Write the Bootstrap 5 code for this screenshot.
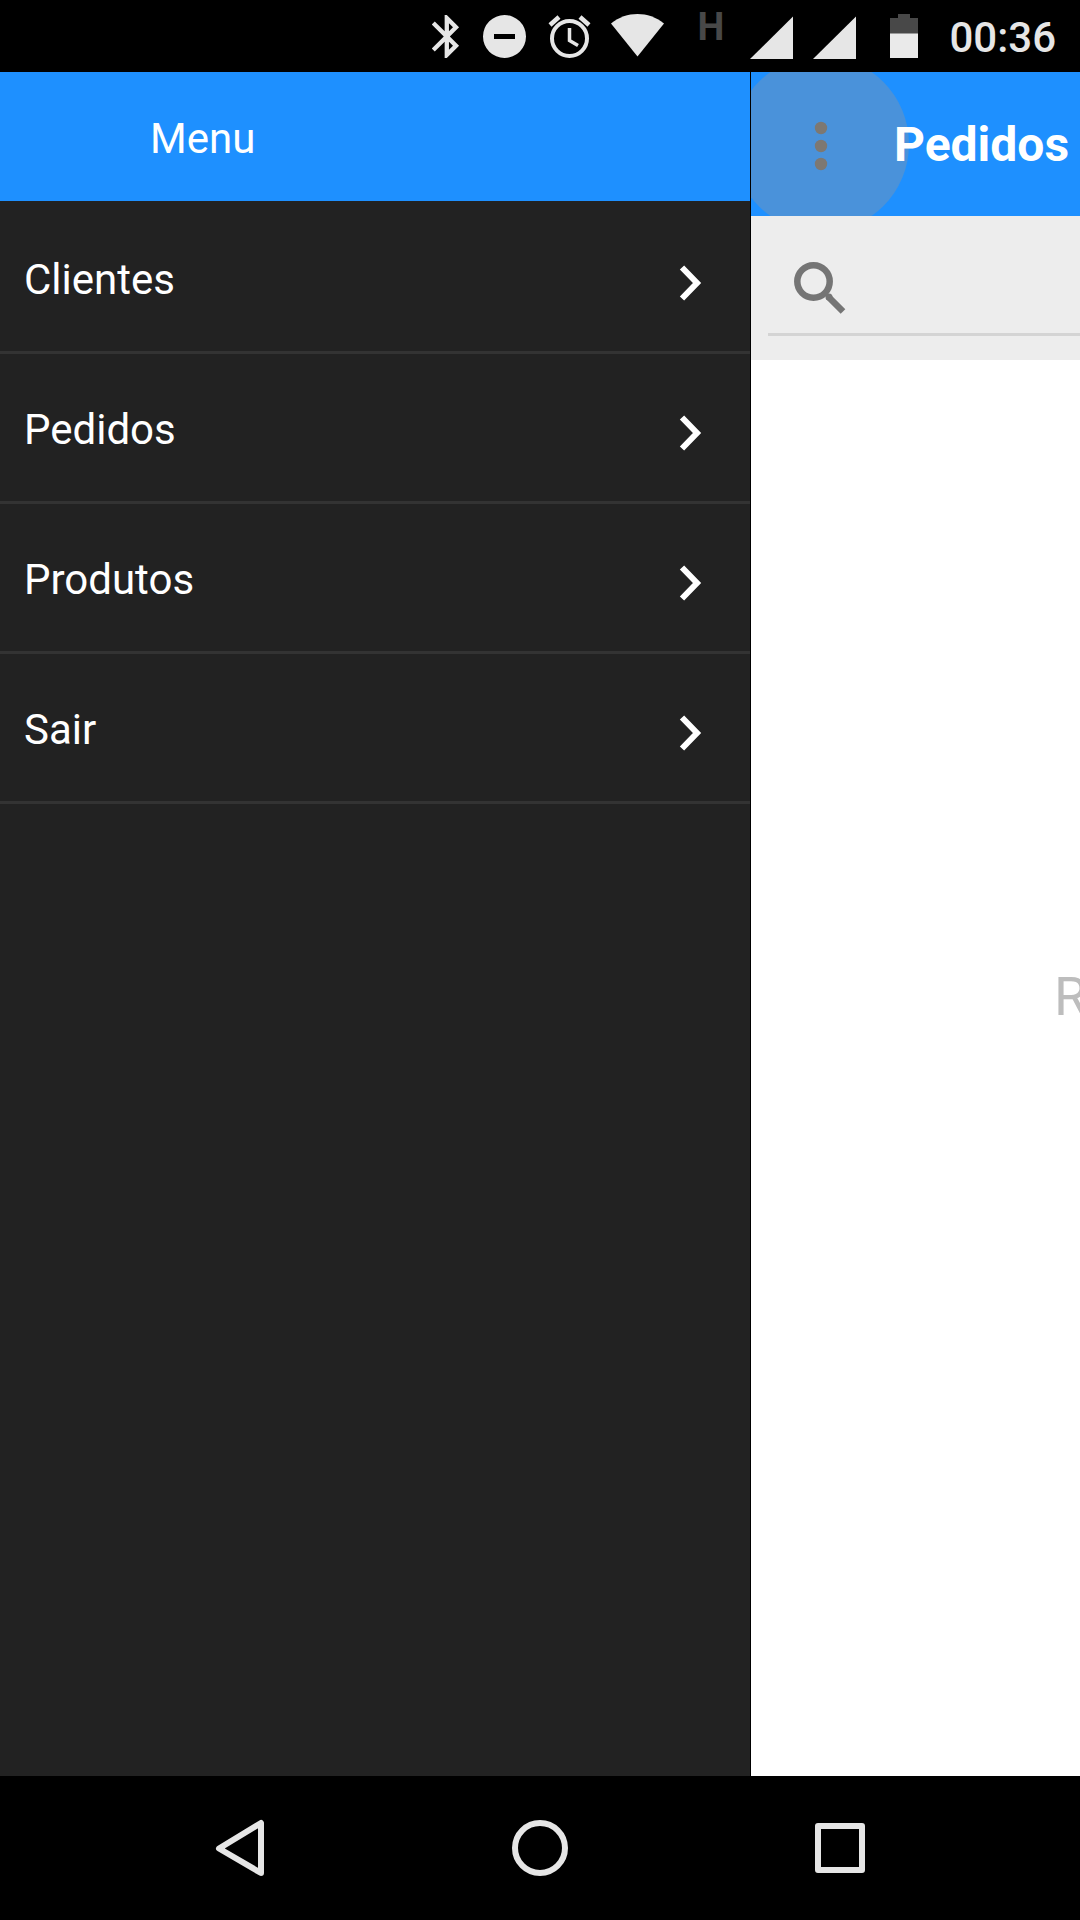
<!DOCTYPE html>
<html lang="pt-BR">
<head>
<meta charset="utf-8">
<meta name="viewport" content="width=device-width, initial-scale=1">
<title>Pedidos</title>
<link href="https://cdn.jsdelivr.net/npm/bootstrap@5.3.0/dist/css/bootstrap.min.css" rel="stylesheet">
<style>
  body { font-family: Roboto, "Liberation Sans", sans-serif; font-size: 42px; line-height: 48px; background: #000; }
  svg { display: block; flex: none; }
  .status-bar { height: 72px; gap: 20px; padding-right: 24px; color: #e6e6e6; }
  .status-bar svg { fill: currentColor; }
  .network-type { width: 46px; padding: 3px 0 0 13px; font-size: 38px; line-height: 48px; font-weight: 700; color: #484848; }
  .clock { font-weight: 500; padding-top: 3px; }
  .brand-bar { background: #1e90ff; color: #fff; }
  .drawer { width: 751px; background: #222; border-right: 1px solid #000; }
  .drawer-title { padding: 43px 24px 38px 150px; font-size: 42px; line-height: 48px; font-weight: 400; }
  .drawer-list { padding-top: 3px; }
  .drawer-link { padding: 52px 36px 47px 24px; border-bottom: 3px solid #333; color: #fff; }
  .drawer-link svg { fill: none; stroke: #fff; stroke-width: 6; }
  .pane { min-width: 0; background: #fff; }
  .pane-header { height: 144px; }
  .more-btn { width: 143px; height: 144px; flex: none; }
  .ripple { left: -18px; top: -16px; width: 176px; height: 176px; background: #4a92da; }
  .pane-title { font-size: 48px; line-height: 56px; font-weight: 700; padding-top: 2px; }
  .search-strip { height: 144px; padding: 24px 0 24px 17px; background: #ededed; }
  .search-box { height: 96px; border-bottom: 3px solid #d4d4d4; padding-left: 18px; }
  .search-box input { font-size: 42px; color: #444; outline: 0; min-width: 0; }
  .empty-note { width: 26px; margin-top: 605px; font-size: 54px; line-height: 64px; color: #bdbdbd; white-space: nowrap; }
  .nav-keys { height: 144px; padding: 0 90px; }
  .nav-keys svg { fill: none; stroke: #e6e6e6; stroke-width: 6; stroke-linejoin: round; }
</style>
</head>
<body>
<div class="d-flex flex-column min-vh-100 overflow-hidden">

  <div class="status-bar d-flex align-items-center justify-content-end">
    <svg width="31" height="48" viewBox="0 0 31 48" aria-label="Bluetooth"><path transform="translate(-11 -1.300) scale(2.150)" d="M17.710 7.710L12 2h-1v7.590L6.410 5 5 6.410 10.590 12 5 17.590 6.410 19 11 14.410V22h1l5.710-5.710-4.300-4.290 4.300-4.290zM13 5.830l1.880 1.880L13 9.590V5.830zm1.880 10.460L13 18.170v-3.760l1.880 1.880z"/></svg>
    <svg width="44" height="48" viewBox="0 0 44 48" aria-label="Não perturbe"><path fill-rule="evenodd" d="M21.500 3a21.500 21.500 0 1 0 0 43 21.500 21.500 0 0 0 0-43zM11 22h21v5H11z"/></svg>
    <svg width="44" height="48" viewBox="0 0 44 48" aria-label="Alarme"><g fill="none" stroke="currentColor"><circle cx="22.500" cy="26.500" r="17.500" stroke-width="4"/><path d="M22.500 16v12.500l8.500 5" stroke-width="3.500"/><path d="M3 13 12 5M33 5l9 8" stroke-width="4.500"/></g></svg>
    <svg width="53" height="48" viewBox="0 0 53 48" aria-label="Wi-Fi"><path d="M0 11.500C8 5 17 2 26.500 2S45 5 53 11.500L26.500 44.500z"/></svg>
    <span class="network-type align-self-start">H</span>
    <svg width="43" height="48" viewBox="0 0 43 48" aria-label="Sinal 1"><path d="M0 47 43 4.500V47z"/></svg>
    <svg width="43" height="48" viewBox="0 0 43 48" aria-label="Sinal 2"><path d="M0 47 43 4.500V47z"/></svg>
    <svg width="53" height="48" viewBox="0 0 53 48" aria-label="Bateria"><path d="M14 22V6h8V2h12v4h8v16z" fill="#484848"/><path d="M14 21.500h28V46H14z" fill="#eaeaea"/></svg>
    <span class="clock">00:36</span>
  </div>

  <div class="d-flex flex-grow-1">
    <aside class="drawer flex-shrink-0">
      <h1 class="drawer-title brand-bar m-0">Menu</h1>
      <nav class="drawer-list d-flex flex-column">
        <a href="#clientes" class="drawer-link d-flex justify-content-between text-decoration-none">Clientes
          <svg width="36" height="48" viewBox="0 0 36 48"><path d="M4 11.500 19 27 4 42.500"/></svg></a>
        <a href="#pedidos" class="drawer-link d-flex justify-content-between text-decoration-none">Pedidos
          <svg width="36" height="48" viewBox="0 0 36 48"><path d="M4 11.500 19 27 4 42.500"/></svg></a>
        <a href="#produtos" class="drawer-link d-flex justify-content-between text-decoration-none">Produtos
          <svg width="36" height="48" viewBox="0 0 36 48"><path d="M4 11.500 19 27 4 42.500"/></svg></a>
        <a href="#sair" class="drawer-link d-flex justify-content-between text-decoration-none">Sair
          <svg width="36" height="48" viewBox="0 0 36 48"><path d="M4 11.500 19 27 4 42.500"/></svg></a>
      </nav>
    </aside>

    <main class="pane flex-grow-1 overflow-hidden">
      <header class="pane-header brand-bar d-flex align-items-center position-relative overflow-hidden">
        <span class="ripple position-absolute rounded-circle"></span>
        <button type="button" class="more-btn border-0 bg-transparent p-0 position-relative" aria-label="Abrir menu">
          <svg width="143" height="144" viewBox="0 0 143 144" fill="#7d7872"><circle cx="70" cy="56" r="6.200"/><circle cx="70" cy="74" r="6.200"/><circle cx="70" cy="92" r="6.200"/></svg>
        </button>
        <h2 class="pane-title m-0 position-relative">Pedidos</h2>
      </header>
      <div class="search-strip">
        <div class="search-box d-flex align-items-center">
          <svg width="60" height="60" viewBox="0 0 60 60" fill="none" stroke="#757575"><circle cx="27.500" cy="24.500" r="16.200" stroke-width="6.500"/><path d="M42 39.500 57 54.500" stroke-width="6.500"/><circle cx="43" cy="40" r="2" stroke-width="3"/></svg>
          <input type="search" class="w-100 border-0 bg-transparent" aria-label="Pesquisar">
        </div>
      </div>
      <div class="d-flex justify-content-end"><span class="empty-note">R</span></div>
    </main>
  </div>

  <div class="nav-keys d-flex bg-black">
    <button type="button" class="btn p-0 border-0 flex-fill d-flex align-items-center justify-content-center" aria-label="Voltar"><svg width="60" height="60" viewBox="0 0 60 60"><path d="M51 5v50L9 30.500z"/></svg></button>
    <button type="button" class="btn p-0 border-0 flex-fill d-flex align-items-center justify-content-center" aria-label="Início"><svg width="60" height="60" viewBox="0 0 60 60"><circle cx="30" cy="30" r="25"/></svg></button>
    <button type="button" class="btn p-0 border-0 flex-fill d-flex align-items-center justify-content-center" aria-label="Recentes"><svg width="60" height="60" viewBox="0 0 60 60"><path d="M8 8h44v44H8z"/></svg></button>
  </div>
</div>
<script src="https://cdn.jsdelivr.net/npm/bootstrap@5.3.0/dist/js/bootstrap.bundle.min.js"></script>
</body>
</html>
